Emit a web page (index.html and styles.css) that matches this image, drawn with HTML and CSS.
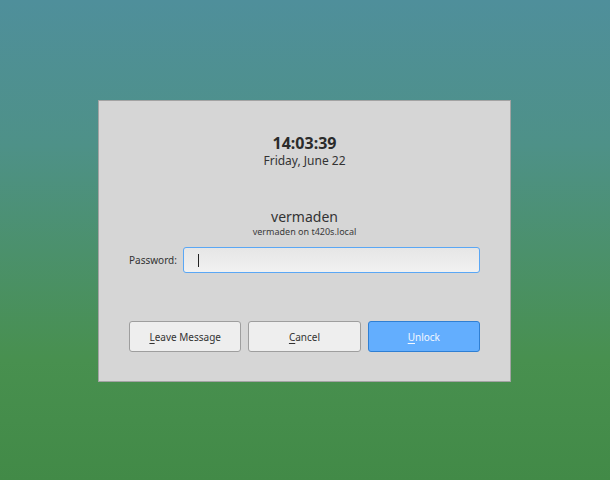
FILE: index.html
```html
<!DOCTYPE html>
<html>
<head>
<meta charset="utf-8">
<link rel="stylesheet" href="styles.css">
</head>
<body>
<div class="dialog">
  <div class="clock">
    <div class="time">14:03:39</div>
    <div class="date">Friday, June 22</div>
  </div>
  <div class="user">
    <div class="name">vermaden</div>
    <div class="host">vermaden on t420s.local</div>
  </div>
  <div class="row">
    <label class="label">Password:</label>
    <div class="input"><span class="caret"></span></div>
  </div>
  <div class="buttons">
    <button class="btn"><u>L</u>eave Message</button>
    <button class="btn"><u>C</u>ancel</button>
    <button class="btn primary"><u>U</u>nlock</button>
  </div>
</div>
</body>
</html>
```
FILE: styles.css
```css
html, body {
  margin: 0;
  height: 480px;
}
body {
  background: linear-gradient(to bottom, #4f8f9b 0%, #4e9188 30%, #48904f 75%, #428a47 100%);
  padding: 100px 0 0 98px;
  box-sizing: border-box;
  font-family: "Noto Sans", "Open Sans", sans-serif;
  color: #2e2e2e;
}
.dialog {
  box-sizing: border-box;
  width: 413px;
  height: 282px;
  background: #d6d6d6;
  border: 1px solid #a3a3a3;
  padding: 0 30px;
  display: flex;
  flex-direction: column;
}
.clock {
  text-align: center;
  margin-top: 31px;
}
.time {
  font-size: 16px;
  font-weight: bold;
  line-height: 22px;
  color: #2b2b2b;
}
.date {
  font-size: 12px;
  line-height: 14px;
  color: #333;
}
.user {
  text-align: center;
  margin-top: 40px;
}
.name {
  font-size: 14px;
  line-height: 18px;
  color: #333;
}
.host {
  font-size: 9px;
  line-height: 12px;
  color: #3a3a3a;
}
.row {
  display: flex;
  align-items: center;
  margin-top: 9px;
  gap: 6px;
}
.label {
  font-size: 10px;
  color: #333;
}
.input {
  flex: 1;
  height: 26px;
  box-sizing: border-box;
  border: 1px solid #5aa7f5;
  border-radius: 3px;
  background: linear-gradient(to bottom, #e6e6e6, #f1f1f1);
  display: flex;
  align-items: center;
  padding-left: 14px;
}
.caret {
  width: 1px;
  height: 13px;
  background: #222;
}
.buttons {
  display: flex;
  gap: 7px;
  margin-top: 48px;
}
.btn {
  flex: 1;
  height: 31px;
  box-sizing: border-box;
  border: 1px solid #9e9e9e;
  border-radius: 3px;
  background: #eeeeee;
  font-family: "Noto Sans", "Open Sans", sans-serif;
  font-size: 10px;
  color: #333;
  padding: 0;
}
.btn u {
  text-decoration-thickness: 1px;
  text-underline-offset: 2px;
}
.primary {
  background: #63aefe;
  border-color: #2f7fd3;
  color: #f4f8ff;
}
```
